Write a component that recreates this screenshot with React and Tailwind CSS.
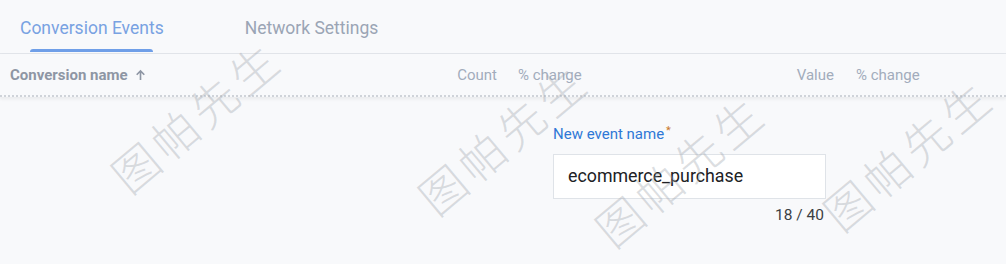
import React from 'react'

const marks = [
  { left: 'left-[93px]', top: 'top-[92px]' },
  { left: 'left-[400px]', top: 'top-[114px]' },
  { left: 'left-[577px]', top: 'top-[146px]' },
  { left: 'left-[805px]', top: 'top-[130px]' },
]

const Watermark = ({ pos }) => (
  <div
    className={`absolute ${pos.left} ${pos.top} whitespace-nowrap pointer-events-none select-none -rotate-[40deg] text-[46px] leading-none tracking-[5px] text-[#9aa0a8]/35 font-light`}
    style={{ fontFamily: '"Noto Sans CJK SC", sans-serif' }}
  >
    图帕先生
  </div>
)

const App = () => {
  return (
    <div
      className="relative w-[1006px] h-[264px] overflow-hidden bg-[#f8f9fb]"
      style={{ fontFamily: 'Roboto, "Liberation Sans", sans-serif' }}
    >
      {/* tabs */}
      <div className="flex h-[54px] border-b border-[#e2e5ea]">
        <div className="relative pl-[20px] pr-[10px]">
          <span className="block mt-[16px] text-[17.5px] leading-[24px] text-[#78a2e2]">Conversion Events</span>
          <div className="absolute bottom-[1px] left-[30px] w-[123px] h-[3px] bg-[#6f9fe8] rounded-t-sm" />
        </div>
        <div className="ml-[71px]">
          <span className="block mt-[16px] text-[17.5px] leading-[24px] text-[#9ba5b5]">Network Settings</span>
        </div>
      </div>

      {/* table header */}
      <div className="flex items-center h-[43px] pt-[1px] text-[15px] border-b-[2px] border-dotted border-[#cfd3d9] shadow-[0_2px_3px_rgba(60,64,67,0.08)]">
        <div className="w-[440px] pl-[10px] flex items-center gap-[6px] font-bold text-[#8e96a4]">
          Conversion name
          <svg width="13" height="14" viewBox="0 0 24 24" className="text-[#8e96a4]">
            <path d="M12 21V5M5 11.5l7-7 7 7" fill="none" stroke="currentColor" strokeWidth="3" />
          </svg>
        </div>
        <div className="w-[57px] text-right text-[#a2acbc]">Count</div>
        <div className="w-[260px] pl-[21px] text-[#a2acbc]">% change</div>
        <div className="w-[77px] text-right text-[#a2acbc]">Value</div>
        <div className="pl-[22px] text-[#a2acbc]">% change</div>
      </div>

      {/* form */}
      <div className="ml-[553px] w-[273px] pt-[27px]">
        <label className="block text-[15px] leading-[20px] text-[#2f78d6]">
          New event name<sup className="ml-[2px] text-[11px] text-[#c9782c]">*</sup>
        </label>
        <div className="mt-[10px] h-[45px] bg-white border border-[#dfe3e8] flex items-center px-[14px]">
          <span className="text-[17.8px] text-[#202124]">ecommerce_purchase</span>
        </div>
        <div className="mt-[6px] pr-[2px] text-right text-[15.5px] leading-[20px] text-[#3c4043]">18 / 40</div>
      </div>

      {marks.map((m, i) => (
        <Watermark key={i} pos={m} />
      ))}
    </div>
  )
}

export default App
